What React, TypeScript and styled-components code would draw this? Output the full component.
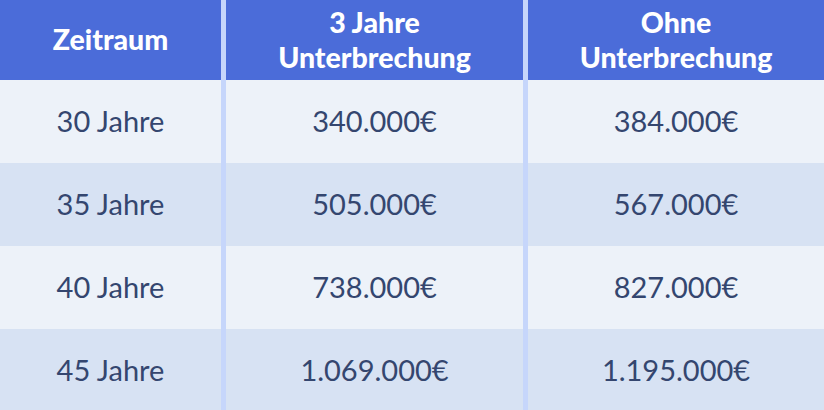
import React from "react";
import styled, { createGlobalStyle } from "styled-components";

const GlobalStyle = createGlobalStyle`
  html, body {
    margin: 0;
    padding: 0;
    background: #ffffff;
  }
  body {
    font-family: "Lato", "Noto Sans", sans-serif;
  }
`;

const Table = styled.div`
  width: 824px;
  height: 410px;
  overflow: hidden;
  display: grid;
  grid-template-columns: 221px 297px 296px;
  column-gap: 5px;
  grid-template-rows: 80px repeat(4, 83px);
  background: #c6d6fb;
`;

const HeadCell = styled.div`
  background: #4b6cd9;
  color: #ffffff;
  font-weight: 900;
  font-size: 28.5px;
  line-height: 35px;
  display: flex;
  align-items: center;
  justify-content: center;
  text-align: center;
  padding-bottom: 1px;
`;

const Cell = styled.div<{ $shade: boolean }>`
  background: ${(p) => (p.$shade ? "#d7e2f3" : "#edf2f9")};
  color: #34466f;
  font-size: 29px;
  display: flex;
  align-items: center;
  justify-content: center;
  padding-bottom: 2px;
`;

const rows = [
  ["30 Jahre", "340.000€", "384.000€"],
  ["35 Jahre", "505.000€", "567.000€"],
  ["40 Jahre", "738.000€", "827.000€"],
  ["45 Jahre", "1.069.000€", "1.195.000€"],
];

export default function App() {
  return (
    <>
      <GlobalStyle />
      <Table>
        <HeadCell>Zeitraum</HeadCell>
        <HeadCell>
          3 Jahre
          <br />
          Unterbrechung
        </HeadCell>
        <HeadCell>
          Ohne
          <br />
          Unterbrechung
        </HeadCell>
        {rows.map((row, i) =>
          row.map((value, j) => (
            <Cell key={`${i}-${j}`} $shade={i % 2 === 1}>
              {value}
            </Cell>
          ))
        )}
      </Table>
    </>
  );
}
